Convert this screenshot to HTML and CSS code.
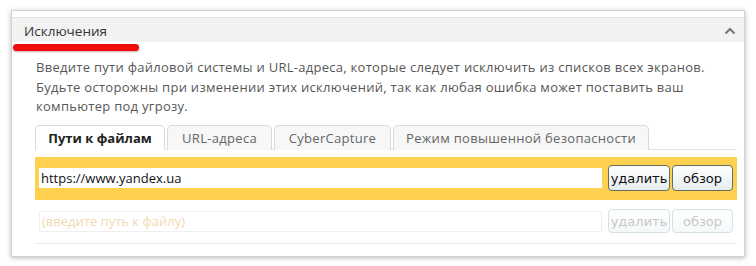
FILE: index.html
```html
<!DOCTYPE html>
<html lang="ru">
<head>
<meta charset="utf-8">
<link rel="stylesheet" href="styles.css">
</head>
<body>
<div class="panel">
  <div class="panel-gap"></div>
  <div class="header">
    <span class="title">Исключения</span>
    <svg class="chevron" width="12" height="8" viewBox="0 0 12 8"><path d="M1.5 6.5 L6 2 L10.5 6.5" fill="none" stroke="#7a7a7a" stroke-width="2.2"/></svg>
  </div>
  <div class="content">
    <p class="desc">Введите пути файловой системы и URL-адреса, которые следует исключить из списков всех экранов. Будьте осторожны при изменении этих исключений, так как любая ошибка может поставить ваш компьютер под угрозу.</p>
    <div class="tabs">
      <div class="tab active t1">Пути к файлам</div>
      <div class="tab t2">URL-адреса</div>
      <div class="tab t3">CyberCapture</div>
      <div class="tab t4">Режим повышенной безопасности</div>
    </div>
    <div class="rows">
      <div class="row selected">
        <input class="path" type="text" value="https://www.yandex.ua">
        <button class="btn del">удалить</button>
        <button class="btn browse">обзор</button>
      </div>
      <div class="row empty">
        <input class="path" type="text" placeholder="(введите путь к файлу)">
        <button class="btn del" disabled>удалить</button>
        <button class="btn browse" disabled>обзор</button>
      </div>
    </div>
  </div>
</div>
<div class="marker"></div>
</body>
</html>
```
FILE: styles.css
```css
html, body {
  margin: 0;
  padding: 0;
  background: #ffffff;
}
body {
  font-family: "Open Sans", "DejaVu Sans", sans-serif;
  position: relative;
  width: 756px;
  height: 266px;
  overflow: hidden;
}
.panel {
  margin: 10px 0 0 11px;
  width: 732px;
  border: 1px solid #d2d2d2;
  background: #fff;
  box-shadow: 0 1px 5px rgba(0,0,0,0.28);
}
.panel-gap {
  height: 6px;
}
.header {
  height: 24px;
  background: #f2f2f2;
  border-top: 1px solid #e3e3e3;
  display: flex;
  align-items: center;
  justify-content: space-between;
  padding: 0 8px 0 12px;
}
.title {
  font-size: 13.5px;
  color: #333;
  margin-top: 2px;
}
.chevron {
  margin-top: 1px;
}
.content {
  padding: 0 7px 12px 23px;
}
.desc {
  margin: 16px 0 0 1px;
  font-size: 13px;
  line-height: 19.5px;
  color: #575757;
  letter-spacing: 0.28px;
}
.tabs {
  margin-top: 8px;
  display: flex;
  gap: 2px;
  height: 24px;
  border-bottom: 1px solid #e4e4e4;
}
.tab {
  box-sizing: border-box;
  height: 25px;
  border: 1px solid #dadada;
  border-bottom: none;
  border-radius: 5px 5px 0 0;
  background: #f7f7f7;
  font-size: 13px;
  color: #666;
  letter-spacing: 0.3px;
  display: flex;
  align-items: center;
  justify-content: center;
}
.tab.active {
  background: #fff;
  color: #222;
  font-weight: bold;
  letter-spacing: 0;
}
.t1 { width: 130px; }
.t2 { width: 105px; }
.t3 { width: 117px; }
.t4 { width: 256px; }
.rows {
  margin-top: 7px;
  border-bottom: 1px solid #e6e6e6;
}
.row {
  height: 43px;
  display: flex;
  align-items: center;
  padding: 0 4px;
}
.row.selected {
  background: #fdd04f;
}
.path {
  box-sizing: border-box;
  width: 563px;
  height: 20px;
  margin: 0 6px 0 0;
  padding: 0 2px;
  border: none;
  background: #fff;
  font-family: "Open Sans", "DejaVu Sans", sans-serif;
  font-size: 13px;
  color: #111;
  outline: none;
}
.row.empty .path {
  height: 21px;
  border: 1px solid #efefef;
}
.path::placeholder {
  color: #f0dab2;
}
.btn {
  box-sizing: border-box;
  height: 26px;
  padding: 0;
  border: 1px solid #617061;
  border-radius: 4px;
  background: linear-gradient(#ffffff, #e6ecef);
  font-family: "DejaVu Sans", sans-serif;
  font-size: 13px;
  color: #111;
}
.btn.del {
  width: 62px;
  margin-right: 2px;
}
.btn.browse {
  width: 61px;
}
.btn:disabled {
  height: 24px;
  border-color: #d3e0e6;
  color: #c8c8c8;
  background: linear-gradient(#ffffff, #f5f8f9);
}
.marker {
  position: absolute;
  left: 13px;
  top: 44px;
  width: 126px;
  height: 7px;
  border-radius: 4px;
  background: #ee0d0d;
  box-shadow: 0 1px 2px rgba(120,0,0,0.35);
}
```
